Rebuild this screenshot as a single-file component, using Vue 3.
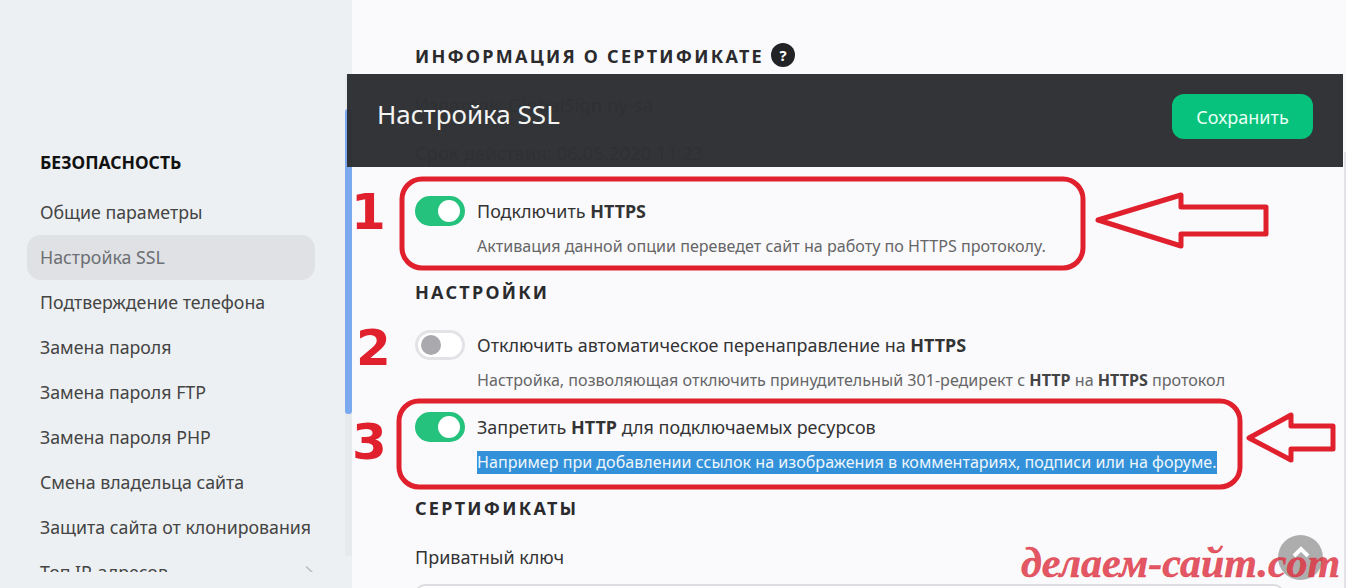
<script setup>
const menu = [
  'Общие параметры',
  'Настройка SSL',
  'Подтверждение телефона',
  'Замена пароля',
  'Замена пароля FTP',
  'Замена пароля PHP',
  'Смена владельца сайта',
  'Защита сайта от клонирования',
  'Топ IP-адресов'
]
</script>

<template>
  <div class="page">
    <aside class="sidebar">
      <h3 class="side-title">БЕЗОПАСНОСТЬ</h3>
      <ul class="menu">
        <li v-for="item in menu" :key="item" :class="['menu-item', { active: item === 'Настройка SSL' }]">
          {{ item }}
          <svg v-if="item === 'Топ IP-адресов'" class="chevron" width="10" height="14" viewBox="0 0 10 14">
            <path d="M2 1.5 8 7l-6 5.500" fill="none" stroke="#b9bcc0" stroke-width="1.500" />
          </svg>
        </li>
      </ul>
      <div class="side-track"><div class="side-thumb" /></div>
    </aside>

    <main class="content">
      <h2 class="heading first">
        ИНФОРМАЦИЯ О СЕРТИФИКАТЕ
        <span class="help">?</span>
      </h2>
      <p class="cert-line one">Издатель: GlobalSign ny-sa</p>
      <p class="cert-line two">Срок действия: 06.05.2020 11:23</p>

      <div class="option opt-one">
        <span class="toggle on"><i /></span>
        <div>
          <div class="label">Подключить <b>HTTPS</b></div>
          <div class="desc">Активация данной опции переведет сайт на работу по HTTPS протоколу.</div>
        </div>
      </div>

      <h2 class="heading h-settings">НАСТРОЙКИ</h2>

      <div class="option opt-two">
        <span class="toggle"><i /></span>
        <div>
          <div class="label">Отключить автоматическое перенаправление на <b>HTTPS</b></div>
          <div class="desc">Настройка, позволяющая отключить принудительный 301-редирект с <b>HTTP</b> на <b>HTTPS</b> протокол</div>
        </div>
      </div>

      <div class="option opt-three">
        <span class="toggle on"><i /></span>
        <div>
          <div class="label">Запретить <b>HTTP</b> для подключаемых ресурсов</div>
          <div class="desc"><span class="selected">Например при добавлении ссылок на изображения в комментариях, подписи или на форуме.</span></div>
        </div>
      </div>

      <h2 class="heading h-certs">СЕРТИФИКАТЫ</h2>
      <div class="field-label">Приватный ключ</div>
      <div class="textarea" />
    </main>

    <header class="topbar">
      <span class="topbar-title">Настройка SSL</span>
      <button class="save">Сохранить</button>
    </header>

    <div class="page-scroll" />

    <svg class="marks" width="1346" height="588" viewBox="0 0 1346 588">
      <g fill="none" stroke="#e0202c" stroke-width="5" stroke-linejoin="round">
        <rect x="402" y="179" width="681" height="89" rx="20" />
        <rect x="399" y="401" width="841" height="86" rx="20" />
        <path d="M1098 220 1181 195v12h85v27h-85v12z" />
        <path d="M1249 438 1291 415v11h42v23h-42v11z" />
      </g>
    </svg>

    <span class="num n1">1</span>
    <span class="num n2">2</span>
    <span class="num n3">3</span>

    <div class="to-top">
      <svg width="20" height="14" viewBox="0 0 20 14"><path d="M3 11 10 4l7 7" fill="none" stroke="#fff" stroke-width="4" /></svg>
    </div>
    <div class="watermark">делаем-сайт.com</div>
  </div>
</template>

<style>
html, body {
  margin: 0;
  background: #fafafd;
}
</style>

<style scoped>
.page {
  position: relative;
  display: flex;
  width: 1346px;
  height: 588px;
  overflow: hidden;
  font-family: "Noto Sans", sans-serif;
  color: #333;
  background: #fafafd;
}

.sidebar {
  position: relative;
  flex: none;
  box-sizing: border-box;
  width: 352px;
  height: 588px;
  padding: 150px 0 0 27px;
  background: #edf0f2;
}

.side-title {
  margin: 0 0 16px 13px;
  font-size: 17.500px;
  line-height: 24px;
  font-weight: 700;
  color: #111;
}

.menu {
  width: 288px;
  height: 382px;
  margin: 0;
  padding: 0;
  list-style: none;
  overflow: hidden;
}

.menu-item {
  position: relative;
  box-sizing: border-box;
  height: 45px;
  padding-left: 13px;
  font-size: 17.750px;
  line-height: 45px;
  color: #444;
  white-space: nowrap;
}

.menu-item.active {
  background: #dfe1e4;
  border-radius: 14px;
  color: #6c6f73;
}

.chevron {
  position: absolute;
  top: 15px;
  right: 1px;
}

.side-track {
  position: absolute;
  top: 74px;
  right: 0;
  width: 7px;
  height: 482px;
  background: #e7eaec;
}

.side-thumb {
  height: 305px;
  margin-top: 35px;
  background: #7aa9ef;
  border-radius: 3px;
}

.content {
  flex: 1;
  box-sizing: border-box;
  padding: 44px 0 0 63px;
}

.heading {
  display: flex;
  align-items: center;
  gap: 7px;
  height: 24px;
  margin: 0;
  font-size: 18px;
  line-height: 24px;
  font-weight: 700;
  letter-spacing: 2.250px;
  color: #2b2b2e;
  white-space: nowrap;
}

.help {
  display: flex;
  align-items: center;
  justify-content: center;
  width: 24px;
  height: 24px;
  margin-top: -3px;
  border-radius: 50%;
  background: #222326;
  color: #fff;
  font-size: 15px;
  letter-spacing: 0;
}

.cert-line {
  height: 24px;
  margin: 0;
  font-size: 18.500px;
  line-height: 24px;
}

.cert-line.one { margin-top: 25px; }
.cert-line.two { margin-top: 24px; }

.option {
  display: flex;
  gap: 12px;
}

.opt-one { margin-top: 31px; }
.opt-two { margin-top: 26px; }
.opt-three { margin-top: 20px; }

.h-settings { margin-top: 22px; }
.h-certs { margin-top: 22px; }

.toggle {
  flex: none;
  display: flex;
  align-items: center;
  box-sizing: border-box;
  width: 50px;
  height: 30px;
  padding: 0 5px;
  border: 3px solid #e2e3e6;
  border-radius: 15px;
  background: #fff;
}

.toggle i {
  width: 20px;
  height: 20px;
  margin-left: -2px;
  border-radius: 50%;
  background: #a9a9ae;
}

.toggle.on {
  justify-content: flex-end;
  border-color: #24c27d;
  background: #24c27d;
}

.toggle.on i {
  width: 22px;
  height: 22px;
  margin: 0 -3px 0 0;
  background: #fff;
}

.label {
  font-size: 17.950px;
  line-height: 30px;
  color: #333;
  white-space: nowrap;
}

.desc {
  margin-top: 8px;
  font-size: 16.100px;
  line-height: 24px;
  color: #666;
  white-space: nowrap;
}

.desc b {
  color: #444;
}

.selected {
  display: inline-block;
  line-height: 23px;
  background: #3391d9;
  color: #eef6fc;
}

.field-label {
  margin-top: 25px;
  font-size: 18px;
  line-height: 24px;
}

.textarea {
  width: 865px;
  height: 60px;
  margin-top: 15px;
  border: 2px solid #dcdde0;
  border-radius: 10px;
  background: #fff;
}

.topbar {
  position: absolute;
  top: 74px;
  left: 347px;
  display: flex;
  align-items: center;
  justify-content: space-between;
  box-sizing: border-box;
  width: 996px;
  height: 93px;
  padding: 0 30px 8px;
  background: rgba(46, 48, 51, 0.98);
}

.topbar-title {
  margin-top: -6px;
  font-size: 26px;
  color: #f4f4f4;
}

.save {
  width: 141px;
  height: 45px;
  border: 0;
  border-radius: 12px;
  background: #07c27c;
  color: #e8fff5;
  font-family: inherit;
  font-size: 18px;
}

.page-scroll {
  position: absolute;
  top: 152px;
  right: 0;
  width: 2px;
  height: 436px;
  background: #e3e4e7;
}

.marks {
  position: absolute;
  top: 0;
  left: 0;
  pointer-events: none;
}

.num {
  position: absolute;
  font-family: "DejaVu Sans", sans-serif;
  font-size: 50px;
  line-height: 50px;
  font-weight: 700;
  color: #e0202c;
}

.n1 { top: 187px; left: 351px; }
.n2 { top: 323px; left: 356px; }
.n3 { top: 417px; left: 352px; }

.to-top {
  position: absolute;
  top: 535px;
  left: 1278px;
  display: flex;
  justify-content: center;
  box-sizing: border-box;
  width: 45px;
  height: 45px;
  padding-top: 10px;
  border-radius: 50%;
  background: #adadad;
}

.watermark {
  position: absolute;
  top: 538px;
  left: 1021px;
  font-family: "Liberation Serif", serif;
  font-size: 42px;
  line-height: 50px;
  font-weight: 700;
  font-style: italic;
  color: rgba(221, 50, 64, 0.82);
  -webkit-text-stroke: 0.5px rgba(221, 50, 64, 0.82);
  white-space: nowrap;
}
</style>
